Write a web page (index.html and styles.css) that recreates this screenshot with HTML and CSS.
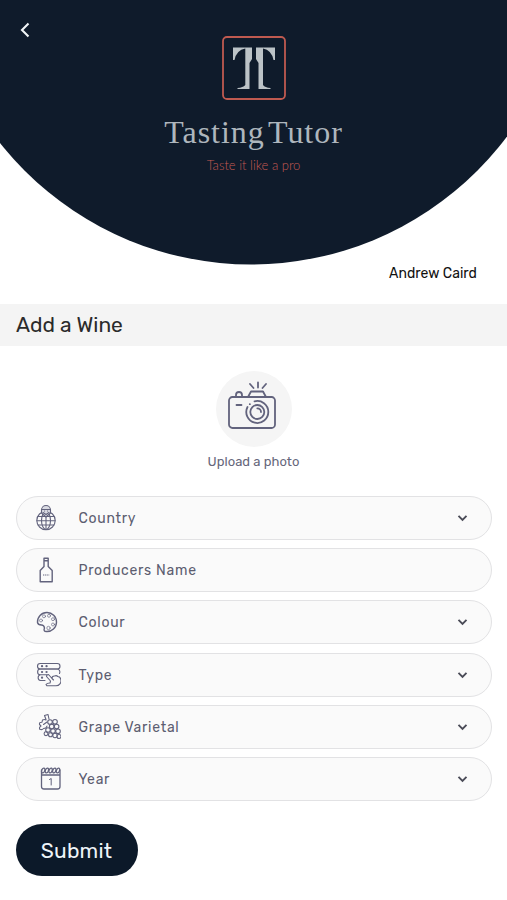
FILE: index.html
```html
<!DOCTYPE html>
<html lang="en">
<head>
<meta charset="utf-8">
<title>Add a Wine</title>
<link rel="stylesheet" href="styles.css">
</head>
<body>
<header class="hero">
  <a class="back" href="#" aria-label="Back"><svg width="11" height="16" viewBox="0 0 11 16"><path d="M9.500 1.500 3 8 9.500 14.500"/></svg></a>
  <svg class="logo" width="64" height="64" viewBox="0 0 64 64">
    <rect class="logo-frame" x="1" y="1" width="62" height="62" rx="4"/>
    <path class="logo-mark" d="M11 11.500H30V23L27.500 27V53H15.500V52Q21 51.500 23.300 49V12.500Q14.500 14 12.500 24H11Z"/>
    <path class="logo-mark" d="M53 11.500H34V23L36.500 27V53H48.500V52Q43 51.500 41 49V12.500Q49.500 14 51.500 24H53Z"/>
  </svg>
  <div class="brand">Tasting Tutor</div>
  <div class="tagline">Taste it like a pro</div>
</header>
<p class="user"><span>Andrew Caird</span></p>
<h1 class="title"><span>Add a Wine</span></h1>
<main>
  <div class="upload">
    <div class="photo">
      <svg class="icon" width="50" height="52" viewBox="0 0 50 52">
        <g stroke-width="1.800"><rect x="2" y="17" width="46" height="31" rx="3.500"/>
        <path d="M9 17v-2a3 3 0 0 1 6 0v2M21 17l3-5.500h12l3 5.500M9.500 25h5M31 2.500v5M23 4l3.500 4M39 4l-3.500 4"/>
        <path d="M20.500 27a11 11 0 1 0 7-5.640M22.800 24.200h.1"/><circle cx="30.300" cy="32" r="7"/><path d="M30.300 28.300a3.700 3.700 0 0 1 3.700 3.700"/></g>
      </svg>
    </div>
    <div class="caption">Upload a photo</div>
  </div>
  <form class="form">
    <div class="field">
      <svg class="icon" width="30" height="30" viewBox="0 0 30 30">
        <circle cx="15" cy="17.500" r="9.200"/><ellipse cx="15" cy="17.500" rx="4.500" ry="9"/><path d="M15 10v16.500M7 13.500h16M6 17.800h18M7 22h16"/>
        <path class="mask" d="M10.500 10V7a4.500 4.500 0 0 1 9 0v3L15 14Z"/><path d="M11 6.500h8M12 9.500l3 2 3-2M13.500 8h.1M16.500 8h.1"/>
      </svg>
      <span>Country</span><svg class="chev" width="11" height="8" viewBox="0 0 11 8"><path d="m1.500 1.800 4 4 4-4"/></svg>
    </div>
    <div class="field">
      <svg class="icon" width="30" height="30" viewBox="0 0 30 30">
        <path stroke-width="1.400" d="M13 3.200h4.200v8.300l4 4v11.200H9.200V15.500l3.800-4ZM13 5.800h4.200"/><path stroke-dasharray="1.300 .8" stroke-linecap="butt" d="M12 20h6.500"/>
      </svg>
      <span>Producers Name</span>
    </div>
    <div class="field">
      <svg class="icon" width="30" height="30" viewBox="0 0 30 30">
        <path stroke-width="1.400" d="M6.500 15.500a9.500 9.500 0 1 1 9 9q-3.500 0-2-3.500-.5-3-3-3-3.500 0-4-2.500Z"/>
        <g class="fine"><circle cx="10" cy="13.500" r="1.500"/><circle cx="13" cy="9.300" r="1.500"/><circle cx="18" cy="8.800" r="1.500"/><circle cx="22" cy="12.200" r="1.500"/><circle cx="22" cy="17.500" r="1.500"/><circle cx="17.500" cy="21" r="1.700"/></g>
      </svg>
      <span>Colour</span><svg class="chev" width="11" height="8" viewBox="0 0 11 8"><path d="m1.500 1.800 4 4 4-4"/></svg>
    </div>
    <div class="field">
      <svg class="icon" width="30" height="30" viewBox="0 0 30 30">
        <rect x="6.500" y="3.500" width="22.500" height="5.500" rx="2.700"/><path d="M16 14.800H9.500a2.900 2.900 0 0 1 0-5.800H26a3 3 0 0 1 2.500 4.500M14 20.500H9.500a2.900 2.900 0 0 1 0-5.700"/>
        <path class="dots" d="M11 6.200h.1M15.500 6.200h.1M11 12h.1M15.500 12h.1M11 17.700h.1"/>
        <path d="M21 18.500 17.500 14.500q-2 0-2 2l4 4.500-.5 2q-3 0-4 1.500l1 1.300H25a5 5 0 0 0 4.800-6.300q-.5-3-3-3-1.500-1.500-3-.5-2.800-.3-2.800 2.500l1.500 1.500"/>
      </svg>
      <span>Type</span><svg class="chev" width="11" height="8" viewBox="0 0 11 8"><path d="m1.500 1.800 4 4 4-4"/></svg>
    </div>
    <div class="field">
      <svg class="icon" width="30" height="30" viewBox="0 0 30 30">
        <path d="m15 7.500-1.500-4 3.500-1 1 4.500M15 8q-1.500-1-3.500 0L11 10.200Q8 10 8.500 12.500L10 14q-2 1-1.500 3 2.500 1.500 4-.5 3 0 3.500-2.500M12.500 12.500 16 10"/>
        <circle cx="19" cy="10" r="2.300"/><circle cx="24" cy="9.800" r="2.300"/><circle cx="20.700" cy="14.400" r="2.300"/><circle cx="25.600" cy="14.500" r="2.300"/><circle cx="17" cy="18" r="2.300"/><circle cx="22" cy="19" r="2.300"/><circle cx="27" cy="19.300" r="2.300"/><circle cx="15" cy="21.700" r="1.900"/><circle cx="19.500" cy="22.800" r="2"/><circle cx="24" cy="23.500" r="2.200"/><circle cx="28" cy="24.500" r="2"/>
      </svg>
      <span>Grape Varietal</span><svg class="chev" width="11" height="8" viewBox="0 0 11 8"><path d="m1.500 1.800 4 4 4-4"/></svg>
    </div>
    <div class="field">
      <svg class="icon" width="30" height="30" viewBox="0 0 30 30">
        <path stroke-width="1.300" d="M10.500 6v16.500a2.500 2.500 0 0 0 2.500 2.500h13.500a2.500 2.500 0 0 0 2.500-2.500V6M10.500 11h18.500"/><path class="one" d="m18.500 15.500 1.700-1V21"/>
        <g stroke-width="1.200"><ellipse cx="12.200" cy="6.500" rx="1.500" ry="2.500" transform="rotate(20 12.200 6.500)"/><ellipse cx="15.900" cy="6.500" rx="1.500" ry="2.500" transform="rotate(20 15.900 6.500)"/><ellipse cx="19.600" cy="6.500" rx="1.500" ry="2.500" transform="rotate(20 19.600 6.500)"/><ellipse cx="23.300" cy="6.500" rx="1.500" ry="2.500" transform="rotate(20 23.300 6.500)"/><ellipse cx="27" cy="6.500" rx="1.500" ry="2.500" transform="rotate(20 27 6.500)"/></g>
      </svg>
      <span>Year</span><svg class="chev" width="11" height="8" viewBox="0 0 11 8"><path d="m1.500 1.800 4 4 4-4"/></svg>
    </div>
    <button class="submit" type="button"><span>Submit</span></button>
  </form>
</main>
</body>
</html>
```
FILE: styles.css
```css
* { box-sizing: border-box; }
body {
  margin: 0;
  height: 900px;
  overflow: hidden;
  background: #fff;
  color: #111;
  font-family: Rubik, Roboto, "Liberation Sans", sans-serif;
}
svg { display: block; flex: none; }
.hero {
  position: relative;
  height: 265px;
  padding-top: 36px;
  display: flex;
  flex-direction: column;
  align-items: center;
  background: #0f1b2b;
  clip-path: circle(320px at 251px -55.5px);
}
.back { position: absolute; left: 19px; top: 22px; }
.back path { fill: none; stroke: #f2f5f7; stroke-width: 2.1; }
.logo-frame { fill: none; stroke: #bf5a50; stroke-width: 1.8; }
.logo-mark { fill: #bcc3c7; }
.brand {
  margin-top: 14px;
  font: 32px/36px "Liberation Serif", serif;
  letter-spacing: 0.95px;
  word-spacing: -5px;
  color: #aeb6bd;
  white-space: nowrap;
}
.tagline {
  margin-top: 6px;
  font: 300 13px/18px Lato, sans-serif;
  color: #c45a52;
}
.user {
  margin: 0;
  height: 39px;
  padding: 1px 30px 0 0;
  font-size: 14px;
  line-height: 16px;
  letter-spacing: 0.06px;
  text-align: right;
}
.title {
  display: flex;
  align-items: center;
  height: 42px;
  margin: 0;
  padding: 0 0 1px 16px;
  background: #f4f4f4;
  color: #2b2b2b;
  font-size: 21px;
  font-weight: 400;
  letter-spacing: 0;
}
.upload { display: flex; flex-direction: column; align-items: center; padding-top: 25px; height: 150px; }
.photo {
  width: 76px;
  height: 76px;
  padding: 9px 0 0 11px;
  border-radius: 50%;
  background: #f5f5f5;
}
.caption { margin-top: 6px; font-size: 13px; line-height: 17px; letter-spacing: 0.02px; color: #66677b; }
.icon { fill: none; stroke: #62637d; stroke-width: 1.1; stroke-linecap: round; stroke-linejoin: round; }
.mask { fill: #d9dae2; }
.fine { stroke-width: 0.65; }
.dots { stroke-width: 2.2; }
.one { stroke-width: 1; }
.form { padding: 0 15.5px; display: flex; flex-direction: column; gap: 8.2px; }
.field {
  display: flex;
  align-items: center;
  height: 44px;
  padding: 0 23px 0 14px;
  border: 1px solid #e2e2e4;
  border-radius: 22px;
  background: #fafafa;
  color: #5c5d70;
  font-size: 14px;
  letter-spacing: 0.72px;
}
.field span { flex: 1; padding: 1px 0 0 18px; }
.chev path { fill: none; stroke: #4a4b57; stroke-width: 1.9; }
.submit {
  width: 122px;
  height: 52px;
  margin-top: 14.5px;
  padding: 1px 0 0;
  border: 0;
  border-radius: 26px;
  background: #0c1929;
  color: #eef4f8;
  font: 21px Rubik, Roboto, sans-serif;
  letter-spacing: 0.2px;
}
```
